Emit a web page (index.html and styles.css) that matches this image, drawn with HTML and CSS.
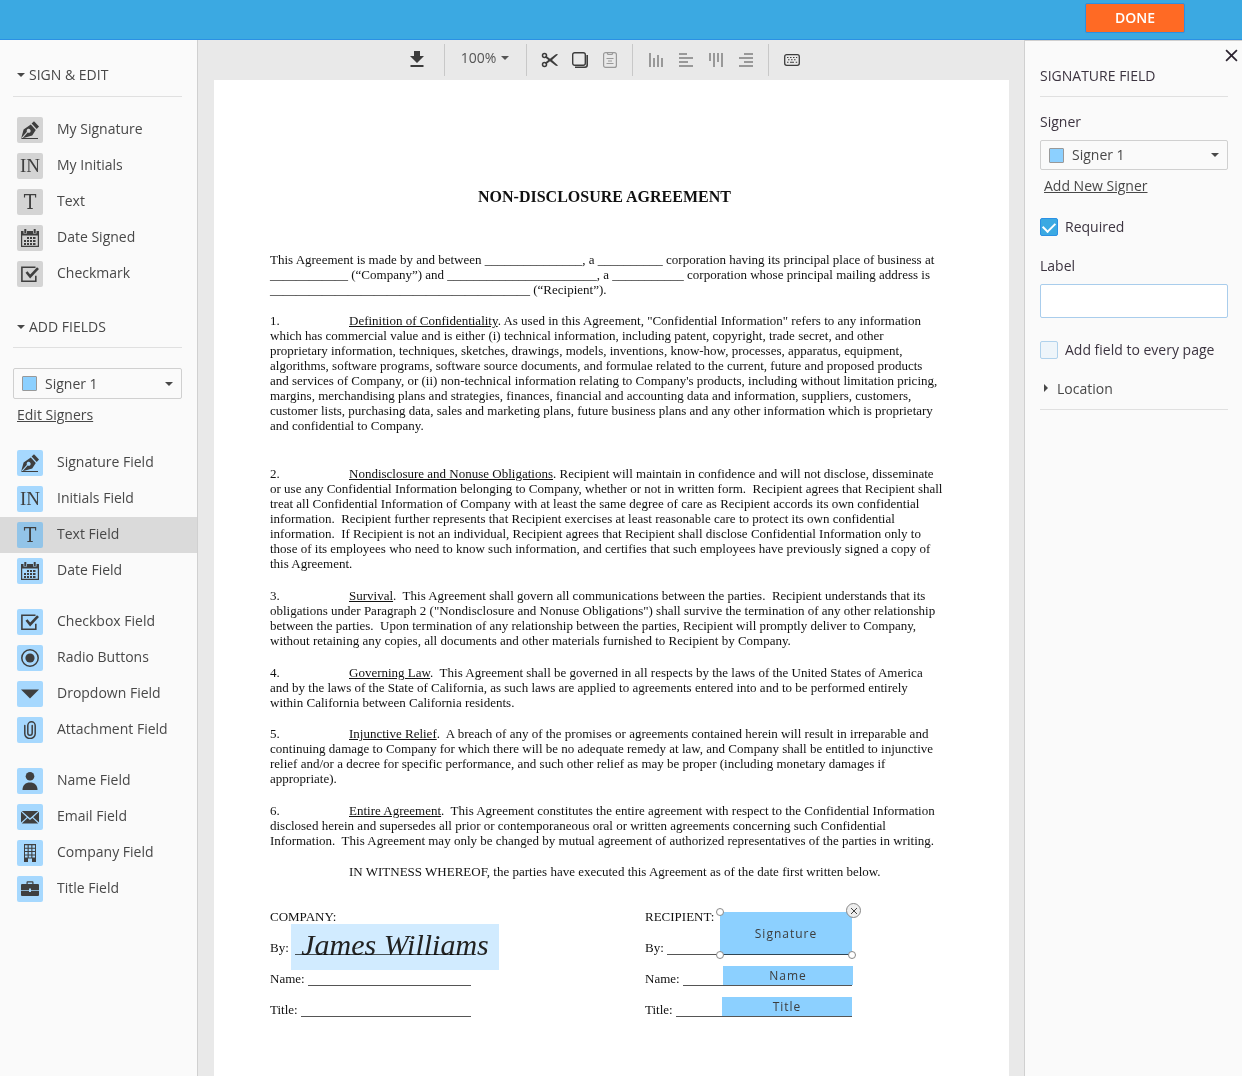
FILE: index.html
```html
<!DOCTYPE html>
<html lang="en">
<head>
<meta charset="utf-8">
<meta name="viewport" content="width=device-width, initial-scale=1">
<title>Non-Disclosure Agreement</title>
<link rel="stylesheet" href="styles.css">
</head>
<body>
<svg class="sprite" aria-hidden="true">
  <symbol id="pen" viewBox="0 0 18 18">
    <path d="M0 17.9 2.6 8.6 9.8 3.6 14.8 9 11.2 14.6 1.6 17.3 6.7 11.6A2 2 0 1 0 5.9 10.800L.8 16.600z"/>
    <path d="M10.600 2.400 13 .2 18 5.600 15.700 8z"/>
    <path d="M.5 17h16.500v1H.5z"/>
  </symbol>
  <symbol id="calendar" viewBox="0 0 18 18">
    <path fill-rule="evenodd" d="M0 2h2.500v2.500h3.500V2h6v2.500h3.500V2H18v16H0zM1.200 6.500v10.300h15.600V6.500z"/>
    <path d="M3.300 0h2v4h-2zM12.700 0h2v4h-2z"/>
    <path d="M6 8h2v2H6zM9 8h2v2H9zM12 8h2.500v2H12zM3 11h2v2H3zM6 11h2v2H6zM9 11h2v2H9zM12 11h2.500v2H12zM3 14h2v2H3zM6 14h2v2H6zM9 14h2v2H9zM12 14h2.500v2H12z"/>
  </symbol>
  <symbol id="check" viewBox="0 0 18 18">
    <path fill="none" stroke="currentColor" stroke-width="1.600" d="M14.500 2.300H.9v14h13.900v-5.500"/>
    <path fill="none" stroke="currentColor" stroke-width="2.600" d="m5.500 7 3.700 4.500L17 3.200"/>
  </symbol>
  <symbol id="radio" viewBox="0 0 18 18">
    <circle cx="9" cy="9" r="8.200" fill="none" stroke="currentColor" stroke-width="1.500"/><circle cx="9" cy="9" r="4.600"/>
  </symbol>
  <symbol id="triangle" viewBox="0 0 18 18"><path d="M0 4.500h18L9 13.500z"/></symbol>
  <symbol id="clip" viewBox="0 0 18 18">
    <path fill="none" stroke="currentColor" stroke-width="1.500" stroke-linecap="round" d="M3.800 4.500v8.300a5.200 4.700 0 0 0 10.400 0V4.700a3.700 3.900 0 0 0-7.400 0v7.200a2.200 2.300 0 0 0 4.400 0V4.500"/>
  </symbol>
  <symbol id="person" viewBox="0 0 18 18"><circle cx="9" cy="4.300" r="4.300"/><path d="M1.500 18c0-5 3-7.500 7.500-7.500s7.500 2.500 7.500 7.500z"/></symbol>
  <symbol id="mail" viewBox="0 0 18 18">
    <path d="M.8 3h16.400L9 10.200zM0 3.800 5.800 9.200 0 14.600zM18 3.800 12.200 9.200 18 14.600zM.8 15.600 6.600 10l2.400 2 2.400-2 5.800 5.600z"/>
  </symbol>
  <symbol id="building" viewBox="0 0 18 18">
    <path fill-rule="evenodd" d="M3 0h12v18h-4v-3.500H7V18H3zM4 1.300v2.400h2.600V1.300zm3.700 0v2.400h2.600V1.300zm3.700 0v2.400H14V1.300zM4 4.700v2.400h2.600V4.700zm3.700 0v2.400h2.600V4.700zm3.700 0v2.400H14V4.700zM4 8.100v2.400h2.600V8.100zm3.700 0v2.400h2.600V8.100zm3.700 0v2.400H14V8.100zM4 11.400v2.200h2.600v-2.200zm3.700 0v2.200h2.600v-2.200zm3.700 0v2.200H14v-2.200z"/>
  </symbol>
  <symbol id="briefcase" viewBox="0 0 18 18">
    <path fill-rule="evenodd" d="M5.500 4V2.200q0-1 1-1h5q1 0 1 1V4H17q1 0 1 1v5h-8V8.500H8V10H0V5q0-1 1-1zM6.700 4h4.600V2.400H6.700z"/>
    <path d="M0 10.800h8V12h2v-1.200h8V15q0 1-1 1H1q-1 0-1-1z"/>
  </symbol>
  <symbol id="caret" viewBox="0 0 8 4"><path d="M0 0h8L4 4z"/></symbol>
</svg>

<header class="topbar"><button class="done" type="button">DONE</button></header>

<div class="workspace">
  <nav class="sidebar" aria-label="Fields">
    <h2 class="section-title"><svg class="caret"><use href="#caret"/></svg>SIGN &amp; EDIT</h2>
    <div class="tools">
      <button class="tool" type="button"><span class="tile"><svg><use href="#pen"/></svg></span><span class="tool-name">My Signature</span></button>
      <button class="tool" type="button"><span class="tile tile-initials" aria-hidden="true">IN</span><span class="tool-name">My Initials</span></button>
      <button class="tool" type="button"><span class="tile tile-text" aria-hidden="true">T</span><span class="tool-name">Text</span></button>
      <button class="tool" type="button"><span class="tile"><svg><use href="#calendar"/></svg></span><span class="tool-name">Date Signed</span></button>
      <button class="tool" type="button"><span class="tile"><svg><use href="#check"/></svg></span><span class="tool-name">Checkmark</span></button>
    </div>

    <h2 class="section-title section-next"><svg class="caret"><use href="#caret"/></svg>ADD FIELDS</h2>
    <div class="picker picker-side">
      <span class="swatch"></span>
      <select aria-label="Signer for new fields"><option>Signer 1</option></select>
      <svg class="caret"><use href="#caret"/></svg>
    </div>
    <a class="link link-edit" href="#">Edit Signers</a>

    <div class="tools tools-blue">
      <button class="tool" type="button"><span class="tile"><svg><use href="#pen"/></svg></span><span class="tool-name">Signature Field</span></button>
      <button class="tool" type="button"><span class="tile tile-initials" aria-hidden="true">IN</span><span class="tool-name">Initials Field</span></button>
      <button class="tool tool-active" type="button"><span class="tile tile-text" aria-hidden="true">T</span><span class="tool-name">Text Field</span></button>
      <button class="tool" type="button"><span class="tile"><svg><use href="#calendar"/></svg></span><span class="tool-name">Date Field</span></button>
    </div>
    <div class="tools tools-blue">
      <button class="tool" type="button"><span class="tile"><svg><use href="#check"/></svg></span><span class="tool-name">Checkbox Field</span></button>
      <button class="tool" type="button"><span class="tile"><svg><use href="#radio"/></svg></span><span class="tool-name">Radio Buttons</span></button>
      <button class="tool" type="button"><span class="tile"><svg><use href="#triangle"/></svg></span><span class="tool-name">Dropdown Field</span></button>
      <button class="tool" type="button"><span class="tile"><svg><use href="#clip"/></svg></span><span class="tool-name">Attachment Field</span></button>
    </div>
    <div class="tools tools-blue">
      <button class="tool" type="button"><span class="tile"><svg><use href="#person"/></svg></span><span class="tool-name">Name Field</span></button>
      <button class="tool" type="button"><span class="tile"><svg><use href="#mail"/></svg></span><span class="tool-name">Email Field</span></button>
      <button class="tool" type="button"><span class="tile"><svg><use href="#building"/></svg></span><span class="tool-name">Company Field</span></button>
      <button class="tool" type="button"><span class="tile"><svg><use href="#briefcase"/></svg></span><span class="tool-name">Title Field</span></button>
    </div>
  </nav>

  <main class="canvas">
    <div class="toolbar">
      <div class="group group-download">
        <button class="icon-button" type="button" aria-label="Download"><svg viewBox="0 0 18 18"><path d="M6 0h6v5h4l-7 7L2 5h4zM2.500 14h13v2h-13z"/></svg></button>
      </div>
      <div class="group group-zoom">
        <button class="zoom" type="button">100%<svg class="caret"><use href="#caret"/></svg></button>
      </div>
      <div class="group">
        <button class="icon-button" type="button" aria-label="Cut"><svg viewBox="0 0 18 18"><g fill="none" stroke="currentColor"><circle cx="3.500" cy="4.500" r="2" stroke-width="1.500"/><circle cx="3.500" cy="13.500" r="2" stroke-width="1.500"/></g><path d="M5 4.800 9 7.700l5.500-4.200q1.500-.8 2.500 0L11 9l6 5.500q-1 .8-2.500 0L9 10.300l-4 2.900-1-1.400L7.300 9 4 6.200z"/></svg></button>
        <button class="icon-button" type="button" aria-label="Copy"><svg viewBox="0 0 18 18"><g fill="none" stroke="currentColor"><rect x="1.700" y="1.700" width="12.600" height="12.600" rx="2" stroke-width="1.400"/><path stroke-width="1.600" d="M16.200 4v10q0 2.200-2.200 2.200H4"/></g></svg></button>
        <button class="icon-button muted" type="button" aria-label="Paste"><svg viewBox="0 0 18 18"><g fill="none" stroke="currentColor" stroke-width="1.200"><rect x="2.600" y="1.600" width="12.800" height="14.800" rx="2"/><path d="M6.500 1.500v1q0 1 1 1h3q1 0 1-1v-1M5.500 7.500h7M7 10h4M5.500 12.500h7"/></g></svg></button>
      </div>
      <div class="group">
        <button class="icon-button muted" type="button" aria-label="Align bottom"><svg viewBox="0 0 18 18"><path d="M2 2h2v14H2zM6 7h2v9H6zM10 4h2v12h-2zM14 7h2v9h-2z"/></svg></button>
        <button class="icon-button muted" type="button" aria-label="Align left"><svg viewBox="0 0 18 18"><path d="M2 2h8v2H2zM2 6h14v2H2zM2 10h9v2H2zM2 14h14v2H2z"/></svg></button>
        <button class="icon-button muted" type="button" aria-label="Align top"><svg viewBox="0 0 18 18"><path d="M2 2h2v8H2zM6 2h2v14H6zM10 2h2v9h-2zM14 2h2v14h-2z"/></svg></button>
        <button class="icon-button muted" type="button" aria-label="Align right"><svg viewBox="0 0 18 18"><path d="M7 2h9v2H7zM2 6h14v2H2zM7 10h9v2H7zM2 14h14v2H2z"/></svg></button>
      </div>
      <div class="group">
        <button class="icon-button" type="button" aria-label="Keyboard shortcuts"><svg viewBox="0 0 18 18"><rect x="1.700" y="3.700" width="14.600" height="10.600" rx="2" fill="none" stroke="currentColor" stroke-width="1.300"/><path d="M4 6h1.500v1H4zM7 6h1.500v1H7zM10 6h1.500v1H10zM13 6h1.200v1H13zM5 8.300h1.500v1H5zM8 8.300h1.500v1H8zM11 8.300h1.500v1H11zM4 10.800h1.500v1H4zM7 10.800h4v1H7zM12.700 10.800h1.500v1h-1.500z"/></svg></button>
      </div>
    </div>

    <article class="paper">
      <h1>NON-DISCLOSURE AGREEMENT</h1>
      <p>This Agreement is made by and between _______________, a __________ corporation having its principal place of business at<br>
        ____________ (“Company”) and _______________________, a ___________ corporation whose principal mailing address is<br>
        ________________________________________ (“Recipient”).</p>
      <p class="break"><span class="num">1.</span><u>Definition of Confidentiality</u>. As used in this Agreement, "Confidential Information" refers to any information<br>
        which has commercial value and is either (i) technical information, including patent, copyright, trade secret, and other<br>
        proprietary information, techniques, sketches, drawings, models, inventions, know-how, processes, apparatus, equipment,<br>
        algorithms, software programs, software source documents, and formulae related to the current, future and proposed products<br>
        and services of Company, or (ii) non-technical information relating to Company's products, including without limitation pricing,<br>
        margins, merchandising plans and strategies, finances, financial and accounting data and information, suppliers, customers,<br>
        customer lists, purchasing data, sales and marketing plans, future business plans and any other information which is proprietary<br>
        and confidential to Company.</p>
      <p class="long"><span class="num">2.</span><u>Nondisclosure and Nonuse Obligations</u>. Recipient will maintain in confidence and will not disclose, disseminate<br>
        or use any Confidential Information belonging to Company, whether or not in written form.&nbsp; Recipient agrees that Recipient shall<br>
        treat all Confidential Information of Company with at least the same degree of care as Recipient accords its own confidential<br>
        information.&nbsp; Recipient further represents that Recipient exercises at least reasonable care to protect its own confidential<br>
        information.&nbsp; If Recipient is not an individual, Recipient agrees that Recipient shall disclose Confidential Information only to<br>
        those of its employees who need to know such information, and certifies that such employees have previously signed a copy of<br>
        this Agreement.</p>
      <p class="long"><span class="num">3.</span><u>Survival</u>.&nbsp; This Agreement shall govern all communications between the parties.&nbsp; Recipient understands that its<br>
        obligations under Paragraph 2 ("Nondisclosure and Nonuse Obligations") shall survive the termination of any other relationship<br>
        between the parties.&nbsp; Upon termination of any relationship between the parties, Recipient will promptly deliver to Company,<br>
        without retaining any copies, all documents and other materials furnished to Recipient by Company.</p>
      <p><span class="num">4.</span><u>Governing Law</u>.&nbsp; This Agreement shall be governed in all respects by the laws of the United States of America<br>
        and by the laws of the State of California, as such laws are applied to agreements entered into and to be performed entirely<br>
        within California between California residents.</p>
      <p class="long"><span class="num">5.</span><u>Injunctive Relief</u>.&nbsp; A breach of any of the promises or agreements contained herein will result in irreparable and<br>
        continuing damage to Company for which there will be no adequate remedy at law, and Company shall be entitled to injunctive<br>
        relief and/or a decree for specific performance, and such other relief as may be proper (including monetary damages if<br>
        appropriate).</p>
      <p><span class="num">6.</span><u>Entire Agreement</u>.&nbsp; This Agreement constitutes the entire agreement with respect to the Confidential Information<br>
        disclosed herein and supersedes all prior or contemporaneous oral or written agreements concerning such Confidential<br>
        Information.&nbsp; This Agreement may only be changed by mutual agreement of authorized representatives of the parties in writing.</p>
      <p class="witness">IN WITNESS WHEREOF, the parties have executed this Agreement as of the date first written below.</p>

      <div class="parties">
        <section class="party party-company">
          <div class="line">COMPANY:</div>
          <div class="line">By:<span class="rule rule-wide"></span></div>
          <div class="line">Name:<span class="rule"></span></div>
          <div class="line">Title:<span class="rule"></span></div>
          <div class="signed">James Williams</div>
        </section>
        <section class="party party-recipient">
          <div class="line">RECIPIENT:</div>
          <div class="line">By:<span class="rule"></span></div>
          <div class="line">Name:<span class="rule"></span></div>
          <div class="line">Title:<span class="rule"></span></div>
          <div class="field field-signature">Signature</div>
          <div class="field field-name">Name</div>
          <div class="field field-title">Title</div>
          <span class="handle handle-nw"></span><span class="handle handle-sw"></span><span class="handle handle-se"></span>
          <button class="remove" type="button" aria-label="Remove field"><svg viewBox="0 0 8 8"><path d="m1 1 6 6M7 1 1 7"/></svg></button>
        </section>
      </div>
    </article>
  </main>

  <aside class="inspector">
    <button class="close" type="button" aria-label="Close"><svg viewBox="0 0 12 12"><path d="m1 1 10 10M11 1 1 11"/></svg></button>
    <h2 class="section-title inspector-title">SIGNATURE FIELD</h2>
    <label class="caption" for="signer">Signer</label>
    <div class="picker">
      <span class="swatch"></span>
      <select id="signer"><option>Signer 1</option></select>
      <svg class="caret"><use href="#caret"/></svg>
    </div>
    <a class="link link-add" href="#">Add New Signer</a>
    <label class="option option-required"><input type="checkbox" checked>Required</label>
    <label class="caption caption-label" for="label">Label</label>
    <input class="text-input" id="label" type="text">
    <label class="option option-every"><input type="checkbox">Add field to every page</label>
    <button class="location" type="button"><svg viewBox="0 0 4 8"><path d="M0 0v8l4-4z"/></svg>Location</button>
  </aside>
</div>
</body>
</html>
```

FILE: styles.css
```css
* { box-sizing: border-box; }

body {
  margin: 0;
  min-height: 100vh;
  display: flex;
  flex-direction: column;
  font: 14px/20px "Open Sans", sans-serif;
  color: #484848;
  background: #e9e9e9;
}

button, input, select { font: inherit; color: inherit; }
button { padding: 0; border: 0; background: none; cursor: pointer; }
svg { display: block; fill: currentColor; }
.sprite { position: absolute; width: 0; height: 0; }
.caret { width: 8px; height: 4px; flex: none; }

/* Top bar */
.topbar {
  height: 40px;
  padding: 3px 57px 0 0;
  display: flex;
  justify-content: flex-end;
  align-items: flex-start;
  background: #3ba9e2;
  border-bottom: 1px solid #2b90e4;
}
.done {
  width: 100px;
  height: 30px;
  border: 1px solid #2b90e4;
  border-radius: 2px;
  background: #ff6a24;
  color: #fff;
  font-weight: 600;
}

.workspace { flex: 1; display: flex; }

/* Field list */
.sidebar {
  flex: none;
  width: 198px;
  padding: 25px 0 24px;
  background: #fafafa;
  border-right: 1px solid #d0d0d0;
}
.section-title {
  display: flex;
  align-items: center;
  gap: 4px;
  margin: 0 15px 15px 13px;
  padding: 0 0 11px 4px;
  border-bottom: 1px solid #e0e0e0;
  font-size: 14px;
  font-weight: 400;
  line-height: 20px;
}
.section-next { margin-top: 25px; margin-bottom: 20px; padding-bottom: 10px; }

.tools + .tools { margin-top: 15px; }
.tool {
  width: 100%;
  height: 36px;
  padding: 5px 0 5px 17px;
  display: flex;
  align-items: flex-start;
  gap: 14px;
  text-align: left;
}
.tool-active { background: #dadada; }
.tile {
  width: 26px;
  height: 26px;
  display: grid;
  place-items: center;
  border-radius: 2px;
  background: #d4d4d4;
  color: #3f3f3f;
}
.tile svg { width: 18px; height: 18px; }
.tile-initials { font: 19px/26px "Liberation Serif", serif; }
.tile-text { font: 21px/26px "DejaVu Serif Condensed", "DejaVu Serif", serif; }
.tools-blue .tile { background: #a6d8fe; }
.tools-blue .tool-active .tile { background: #92c4e8; }
.tool-name { line-height: 24px; }

.picker {
  height: 30px;
  padding: 0 8px;
  display: flex;
  align-items: center;
  border: 1px solid #d0d0d0;
  border-radius: 2px;
}
.picker-side { height: 31px; margin: 0 15px 0 13px; }
.swatch { width: 15px; height: 15px; border: 1px solid #999; border-radius: 1px; background: #8cd0ff; }
.picker select {
  flex: 1;
  min-width: 0;
  padding: 0 0 0 8px;
  border: 0;
  background: none;
  appearance: none;
}
.link { display: block; width: fit-content; color: inherit; }
.link-edit { margin: 6px 0 20px 17px; }

/* Toolbar */
.canvas { flex: 1; min-width: 0; display: flex; flex-direction: column; }
.toolbar {
  height: 40px;
  padding: 4px 7px 4px 0;
  display: flex;
  justify-content: center;
  color: #3c3c3c;
}
.group { padding: 0 7px 0 8px; display: flex; align-items: center; border-left: 1px solid #c8c8c8; }
.group-download { padding: 0 12px 0 0; border: 0; }
.group-zoom { width: 82px; padding: 0; justify-content: center; }
.icon-button { width: 30px; height: 30px; display: grid; place-items: center; }
.icon-button svg { width: 18px; height: 18px; }
.muted { color: #999; }
.zoom { display: flex; align-items: center; gap: 5px; padding-bottom: 4px; color: #555; }

/* Document */
.paper {
  flex: 1;
  margin: 0 15px 0 16px;
  padding: 107px 70px 40px 56px;
  background: #fff;
  color: #111;
  font: 13px/15px "Liberation Serif", serif;
}
.paper h1 { margin: 0 0 45px; font-size: 16px; line-height: 20px; text-align: center; }
.paper p { margin: 0 0 16px; white-space: nowrap; }
.paper .long { margin-bottom: 17px; }
.paper .break { margin-bottom: 33px; }
.paper .witness { margin-bottom: 30px; padding-left: 79px; }
.num { display: inline-block; width: 79px; }

.parties { display: flex; gap: 174px; }
.party { position: relative; display: grid; gap: 16px; }
.party-company { width: 201px; }
.party-recipient { width: 207px; }
.line { display: flex; gap: 3px; }
.rule { flex: 1; border-bottom: 1px solid #555; }
.rule-wide { margin-left: 3px; }

/* Items dropped on the page */
.signed, .field { position: absolute; mix-blend-mode: multiply; }
.signed {
  left: 21px;
  top: 15px;
  width: 208px;
  height: 46px;
  background: #d1ebff;
  color: #222;
  font: italic 30px/42px "Liberation Serif", cursive;
  text-align: center;
  white-space: nowrap;
}
.field {
  display: grid;
  place-items: center;
  background: #8cd0ff;
  color: #3c3c3c;
  font: 12px/16px "Open Sans", sans-serif;
  letter-spacing: 1px;
}
.field-signature { left: 75px; top: 3px; width: 132px; height: 43px; }
.field-name { left: 78px; top: 57px; width: 130px; height: 19px; }
.field-title { left: 77px; top: 88px; width: 130px; height: 19px; }
.handle {
  position: absolute;
  width: 8px;
  height: 8px;
  border: 1px solid #888;
  border-radius: 50%;
  background: #fff;
}
.handle-nw { left: 71px; top: -1px; }
.handle-sw { left: 71px; top: 42px; }
.handle-se { left: 203px; top: 42px; }
.remove {
  position: absolute;
  left: 201px;
  top: -6px;
  width: 15px;
  height: 15px;
  display: grid;
  place-items: center;
  border: 1px solid #888;
  border-radius: 50%;
  background: #eee;
}
.remove svg { width: 8px; height: 8px; fill: none; stroke: #444; }

/* Field settings */
.inspector {
  flex: none;
  position: relative;
  width: 218px;
  padding: 25px 14px 24px 15px;
  background: #fafafa;
  border-left: 1px solid #d0d0d0;
  border-top: 1px solid #d0d0d0;
  color: #3c3440;
}
.inspector-title { margin: 0 0 15px; padding: 0 0 10px; }
.close { position: absolute; top: 8px; right: 4px; }
.close svg { width: 13px; height: 13px; fill: none; stroke: #2c2430; stroke-width: 1.6; }
.caption { display: block; margin-bottom: 8px; }
.inspector .picker, .link-add, .location { color: #484848; }
.link-add { margin: 6px 0 21px 4px; }
.option { display: flex; align-items: center; gap: 7px; }
.option input {
  appearance: none;
  width: 18px;
  height: 18px;
  margin: 0;
  border: 1px solid #b0d2ec;
  border-radius: 2px;
  background: #eef5fa;
}
.option input:checked {
  border-color: #2b90e4;
  background: #3ba9e2;
  display: grid;
  place-items: center;
}
.option input:checked::before {
  content: "";
  width: 10px;
  height: 6px;
  margin-bottom: 3px;
  border: solid #fff;
  border-width: 0 0 2px 2px;
  transform: rotate(-45deg);
}
.caption-label { margin-top: 19px; }
.text-input {
  display: block;
  width: 100%;
  height: 34px;
  margin-bottom: 22px;
  padding: 0 8px;
  border: 1px solid #a9cdec;
  border-radius: 2px;
  background: #fff;
}
.location {
  width: 100%;
  margin-top: 19px;
  padding: 0 0 10px 4px;
  display: flex;
  align-items: center;
  gap: 9px;
  border-bottom: 1px solid #e0e0e0;
}
.location svg { width: 4px; height: 8px; margin-bottom: 3px; }
```
